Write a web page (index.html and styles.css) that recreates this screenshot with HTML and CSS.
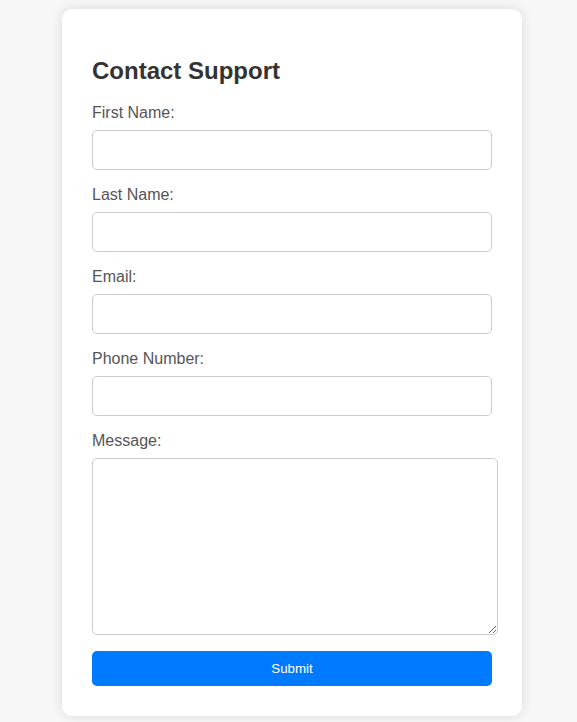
FILE: index.html
```html
<!DOCTYPE html>
<html lang="en">
<head>
<meta charset="utf-8">
<title>Contact Support</title>
<link rel="stylesheet" href="styles.css">
</head>
<body>
<div class="card">
  <h2 class="title">Contact Support</h2>
  <form class="form">
    <label class="label" for="first">First Name:</label>
    <input class="field" id="first" type="text">
    <label class="label" for="last">Last Name:</label>
    <input class="field" id="last" type="text">
    <label class="label" for="email">Email:</label>
    <input class="field" id="email" type="email">
    <label class="label" for="phone">Phone Number:</label>
    <input class="field" id="phone" type="tel">
    <label class="label" for="msg">Message:</label>
    <textarea class="message" id="msg"></textarea>
    <button class="submit" type="button">Submit</button>
  </form>
</div>
</body>
</html>
```

FILE: styles.css
```css
html, body {
  margin: 0;
}
body {
  background: #f7f7f7;
  font-family: "Liberation Sans", Arial, sans-serif;
  display: flex;
  justify-content: center;
  padding: 9px 0 6px 7px;
}
.card {
  width: 400px;
  padding: 30px;
  background: #ffffff;
  border-radius: 10px;
  box-shadow: 0 0 12px rgba(0, 0, 0, 0.12);
}
.title {
  margin: 18px 0 18px;
  font-size: 24px;
  line-height: 28px;
  font-weight: bold;
  color: #333333;
}
.form {
  display: flex;
  flex-direction: column;
  align-items: flex-start;
}
.label {
  display: block;
  font-size: 16px;
  line-height: 19px;
  color: #555555;
  margin-bottom: 8px;
}
.field {
  display: block;
  box-sizing: border-box;
  width: 400px;
  height: 40px;
  padding: 10px;
  margin: 0 0 15px;
  border: 1px solid #cccccc;
  border-radius: 5px;
  font-size: 16px;
  font-family: inherit;
  background: #ffffff;
}
.message {
  display: block;
  box-sizing: border-box;
  width: 406px;
  height: 177px;
  padding: 2px;
  margin: 0 0 16px;
  border: 1px solid #cccccc;
  border-radius: 5px;
  background: #ffffff;
}
.submit {
  display: block;
  width: 400px;
  height: 35px;
  padding: 0;
  border: none;
  border-radius: 5px;
  background: #007bff;
  color: #ffffff;
  font-family: inherit;
  font-size: 13.33px;
}
```
